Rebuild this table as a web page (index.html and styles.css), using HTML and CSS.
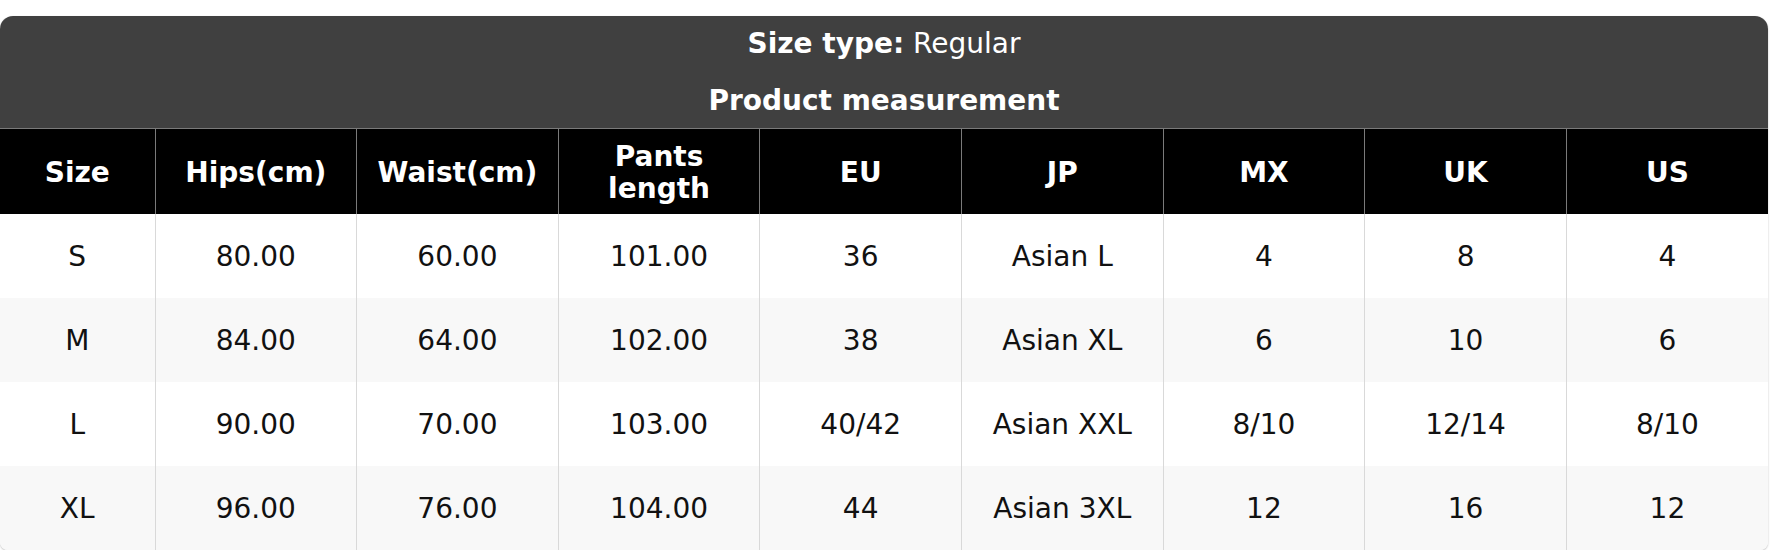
FILE: index.html
```html
<!DOCTYPE html>
<html>
<head>
<meta charset="utf-8">
<link rel="stylesheet" href="styles.css">
</head>
<body>
<div class="card">
  <div class="titles">
    <div class="title"><b>Size type:</b> Regular</div>
    <div class="title title-sub"><b>Product measurement</b></div>
  </div>
  <table class="size-table">
    <colgroup>
      <col class="col-first">
      <col><col><col><col><col><col><col><col>
    </colgroup>
    <thead>
      <tr>
        <th>Size</th><th>Hips(cm)</th><th>Waist(cm)</th><th>Pants<br>length</th><th>EU</th><th>JP</th><th>MX</th><th>UK</th><th>US</th>
      </tr>
    </thead>
    <tbody>
      <tr><td>S</td><td>80.00</td><td>60.00</td><td>101.00</td><td>36</td><td>Asian L</td><td>4</td><td>8</td><td>4</td></tr>
      <tr class="alt"><td>M</td><td>84.00</td><td>64.00</td><td>102.00</td><td>38</td><td>Asian XL</td><td>6</td><td>10</td><td>6</td></tr>
      <tr><td>L</td><td>90.00</td><td>70.00</td><td>103.00</td><td>40/42</td><td>Asian XXL</td><td>8/10</td><td>12/14</td><td>8/10</td></tr>
      <tr class="alt"><td>XL</td><td>96.00</td><td>76.00</td><td>104.00</td><td>44</td><td>Asian 3XL</td><td>12</td><td>16</td><td>12</td></tr>
    </tbody>
  </table>
</div>
</body>
</html>
```

FILE: styles.css
```css
html, body {
  margin: 0;
  padding: 0;
  background: #ffffff;
}
body {
  font-family: "DejaVu Sans", "Liberation Sans", sans-serif;
  font-size: 28px;
  color: #111;
}
.card {
  margin: 16px 2px 0 0;
  border-radius: 13px 13px 8px 8px;
  overflow: hidden;
  box-shadow: 0 1px 2px rgba(0,0,0,0.25);
  background: #fff;
}
.titles {
  background: #404040;
  color: #fff;
  text-align: center;
  padding: 11px 0 8px;
  height: 112px;
  box-sizing: border-box;
}
.title {
  line-height: 34px;
}
.title-sub {
  margin-top: 23px;
}
.size-table {
  width: 100%;
  border-collapse: collapse;
  table-layout: fixed;
}
.col-first {
  width: 155px;
}
.size-table th {
  background: #000;
  color: #fff;
  font-weight: bold;
  height: 85px;
  line-height: 32px;
  padding: 3px 6px 0;
  border-top: 1px solid #7a7a7a;
  border-left: 1px solid #7a7a7a;
  text-align: center;
  vertical-align: middle;
  box-sizing: border-box;
}
.size-table th:first-child,
.size-table td:first-child {
  border-left: none;
}
.size-table td {
  height: 84px;
  padding: 2px 6px 0;
  text-align: center;
  vertical-align: middle;
  border-left: 1px solid #d9d9d9;
  box-sizing: border-box;
}
.size-table tr.alt td {
  background: #f8f8f8;
}
```
